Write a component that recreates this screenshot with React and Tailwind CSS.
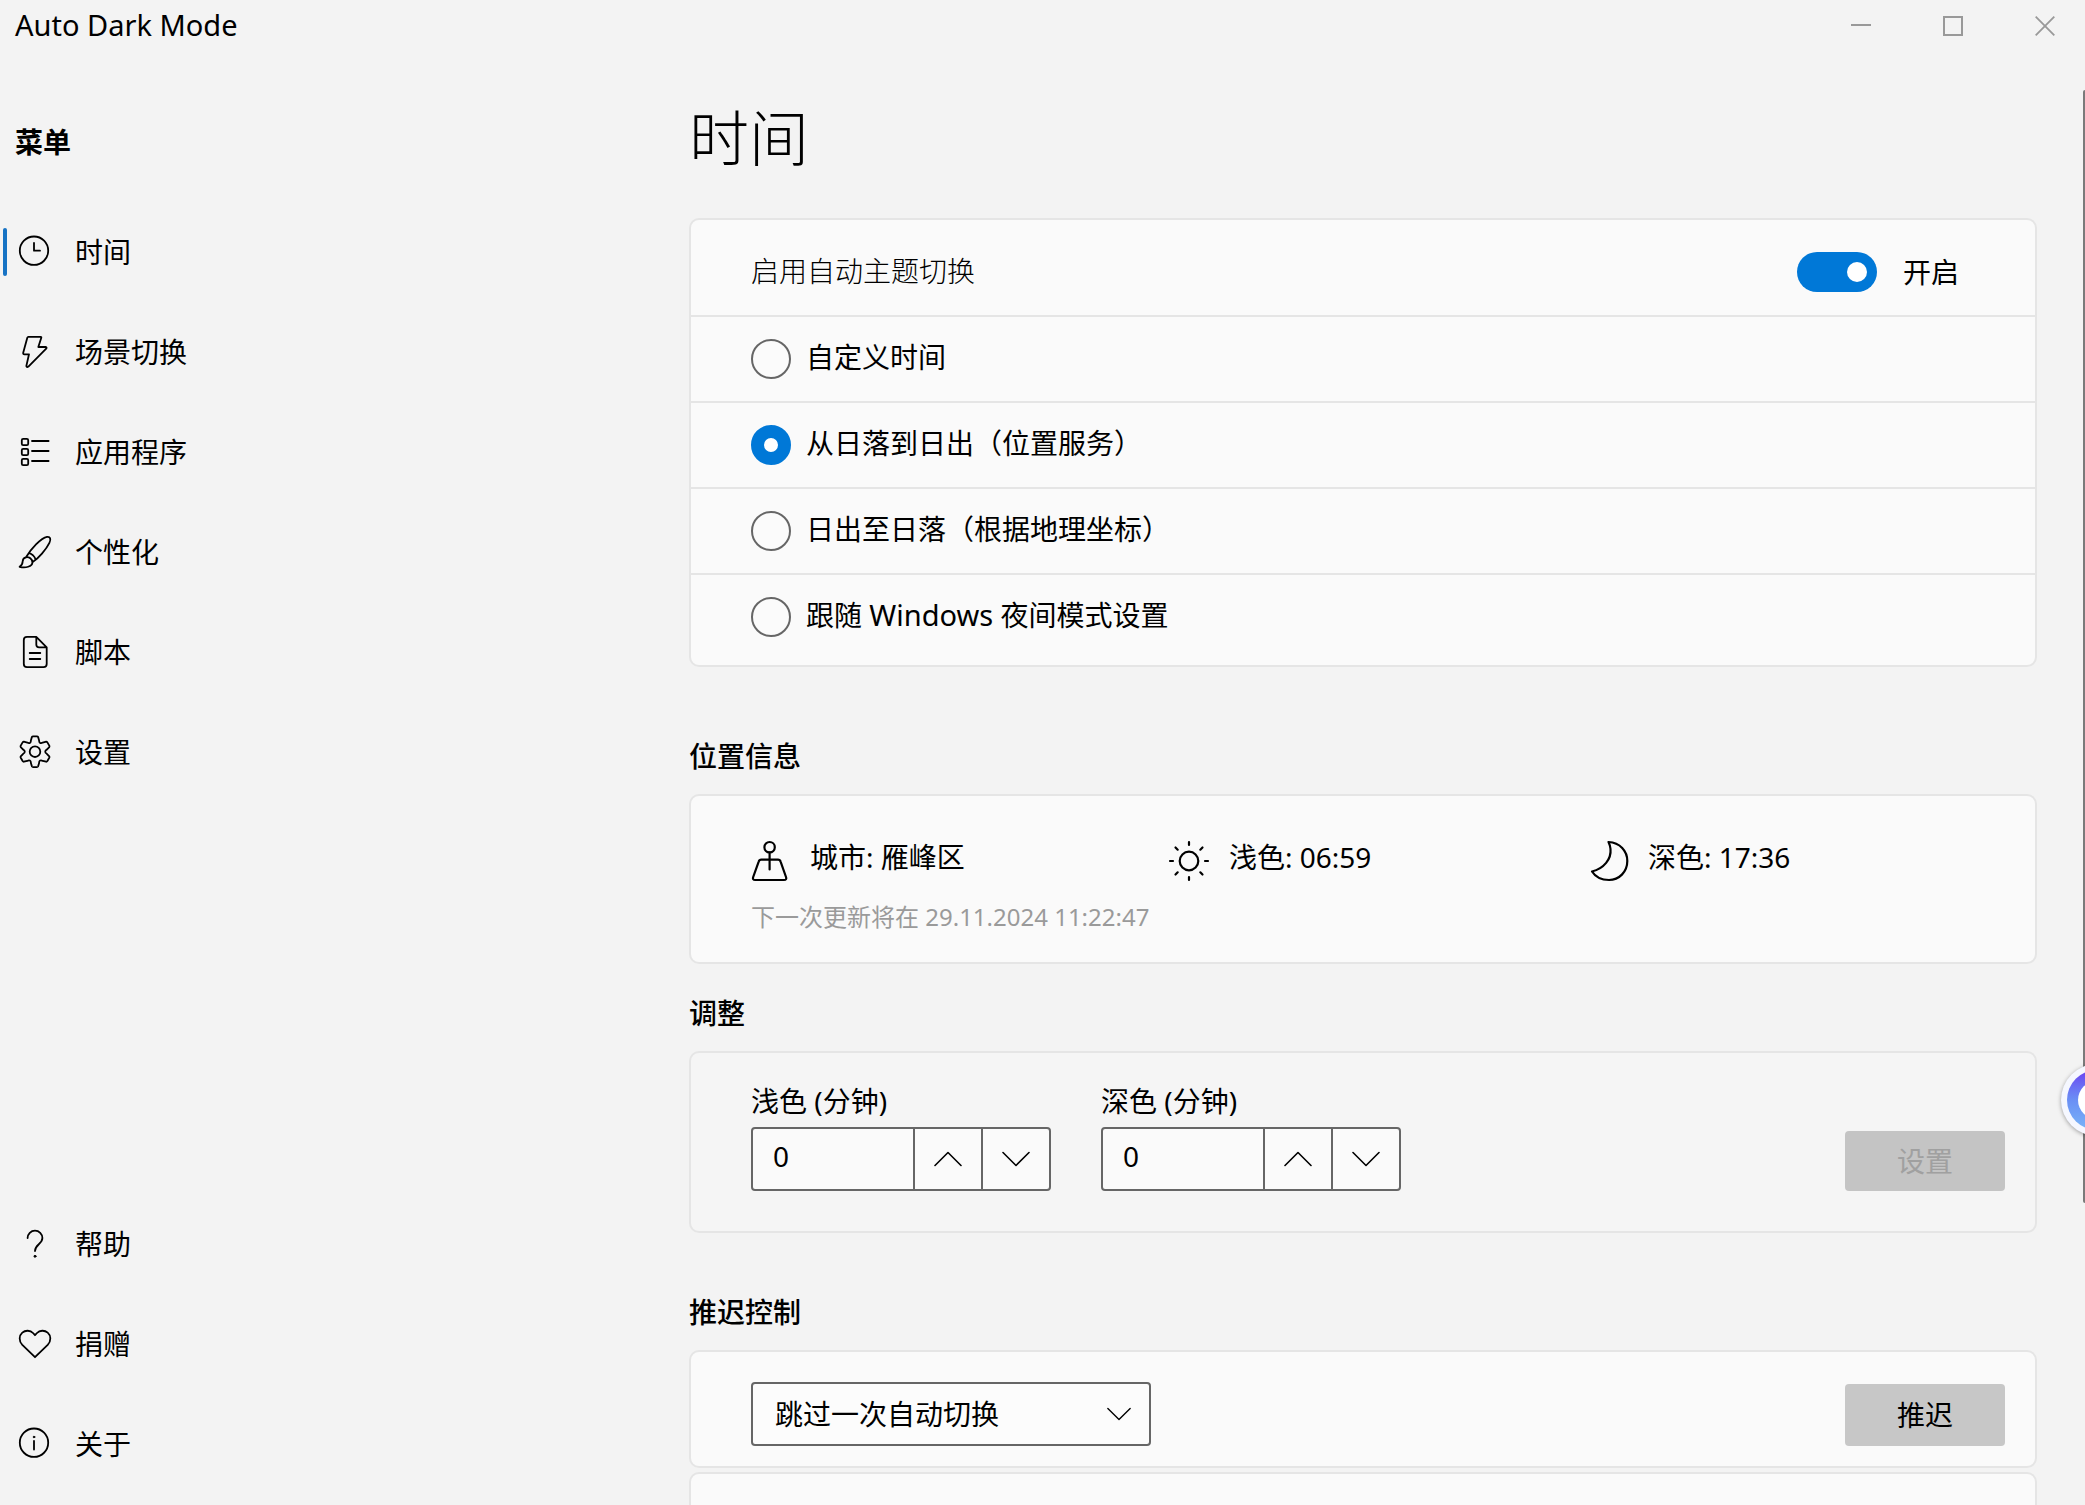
import React, { useState } from "react";

const stroke = {
  fill: "none",
  stroke: "currentColor",
  strokeWidth: 1.8,
  strokeLinecap: "round",
  strokeLinejoin: "round",
};

const polar = (angle, radius) => {
  const a = (angle * Math.PI) / 180;
  return `${(17 + radius * Math.cos(a)).toFixed(2)} ${(15.7 + radius * Math.sin(a)).toFixed(2)}`;
};

const gearPath =
  [0, 1, 2, 3, 4, 5]
    .map((k) => {
      const a = k * 60 - 90;
      return [
        `${k === 0 ? "M" : "L"}${polar(a - 12, 15)}`,
        `Q${polar(a - 10, 15.6)} ${polar(a - 7, 15.5)}`,
        `L${polar(a + 7, 15.5)}`,
        `Q${polar(a + 10, 15.6)} ${polar(a + 12, 15)}`,
        `L${polar(a + 20, 12)}`,
        `Q${polar(a + 23, 10.3)} ${polar(a + 30, 10.2)}`,
        `Q${polar(a + 37, 10.3)} ${polar(a + 40, 12)}`,
      ].join(" ");
    })
    .join(" ") + "Z";

const icons = {
  clock: (
    <>
      <circle cx="16" cy="14.7" r="14.2" />
      <path d="M16 7v7.7h6" />
    </>
  ),
  bolt: <path d="M10.3 .8H22.6q1 0 .7 1L20.3 11h7.3q1.6.3.6 1.7L10.4 30.6q-1.6 1.1-2.1-.5L11 18.3H6.4q-1.5 0-1.2-1.5L9.3 1.7q.3-.9 1-.9Z" />,
  list: (
    <>
      <rect x="3.8" y="2.8" width="6.4" height="6.4" rx="1.4" />
      <rect x="3.8" y="12.8" width="6.4" height="6.4" rx="1.4" />
      <rect x="3.8" y="22.8" width="6.4" height="6.4" rx="1.4" />
      <path d="M14 5h16.6M14 15h16.6M14 25h16.6" />
    </>
  ),
  brush: (
    <path d="M8 21.3C12.7 13.3 23 1.9 29 .9c3.4-.5 4.2 2.5 2.4 6C28.3 13.3 20.3 22.6 14.4 26.3M8 21.3c3-.7 6.4 1.7 6.4 5.2c0 4.2-7 5.7-12.8 4.3c2.2-1.3 3-2.8 3.1-5.5c.1-2.2 1.3-3.6 3.3-4ZM10.9 17q5 1.5 6.7 6.5" />
  ),
  document: (
    <>
      <path d="M18.3 .8H9q-3.2 0-3.2 3.2V28q0 3.2 3.2 3.2H25.5q3.2 0 3.2-3.2V11.3ZM18.3 .8V8.5q0 2.8 2.8 2.8h7.5" />
      <path d="M11.7 17H22.3M11.7 23H22.3" />
    </>
  ),
  gear: (
    <>
      <path d={gearPath} />
      <circle cx="17" cy="15.7" r="5.3" />
    </>
  ),
  help: (
    <>
      <path d="M9.6 10a7.4 7.4 0 0 1 14.8 0C24.4 16 17 16.5 17 23" />
      <circle cx="17" cy="28.3" r="1" fill="currentColor" strokeWidth="1" />
    </>
  ),
  heart: (
    <path d="M17 29.2L4.3 16.9C.6 13 1 7.5 4.3 4.6C7.5 1.9 12.3 2.2 15 5L17 7.2L19 5C21.7 2.2 26.5 1.9 29.7 4.6C33 7.5 33.4 13 29.7 16.9Z" />
  ),
  info: (
    <>
      <circle cx="16" cy="14.7" r="14.2" />
      <path d="M16 13v8.5" />
      <circle cx="16" cy="9" r=".8" fill="currentColor" strokeWidth="1" />
    </>
  ),
};

const bigIcons = {
  city: (
    <>
      <circle cx="19.6" cy="6.2" r="5.2" />
      <path d="M19.6 11.5V28.5M11.3 18.6H28q2 0 2.6 2L36 36q1 3-2 3H5.2q-3 0-2-3L8.7 20.6q.6-2 2.6-2Z" />
    </>
  ),
  sun: (
    <>
      <circle cx="20" cy="20" r="9.3" />
      <path d="M20 1v3M20 36v3M1 20h3M36 20h3M6.5 6.5l2.2 2.2M31.3 31.3l2.2 2.2M6.5 33.5l2.2-2.2M31.3 8.7l2.2-2.2" />
    </>
  ),
  moon: <path d="M20.5 1C32 1.7 39.3 10 39.3 20C39.3 31 31 39 21 39C13.5 39 7.5 36 4 30.5C16 27.5 23.5 18 22.5 8C22.2 5 21.5 3 20.5 1Z" />,
};

function NavIcon({ name }) {
  return (
    <svg viewBox="0 0 32 32" className="size-8 shrink-0 overflow-visible" aria-hidden="true" {...stroke}>
      {icons[name]}
    </svg>
  );
}

function BigIcon({ name }) {
  return (
    <svg viewBox="0 0 40 40" className="size-10 shrink-0 overflow-visible" aria-hidden="true" {...stroke} strokeWidth={2.2}>
      {bigIcons[name]}
    </svg>
  );
}

function Chevron({ up = false, className = "h-4 w-7" }) {
  return (
    <svg viewBox="0 0 28 16" className={className} aria-hidden="true" {...stroke} strokeWidth={1.6}>
      <path d={up ? "M1 14.5L14 1.5L27 14.5" : "M1 1.5L14 14.5L27 1.5"} />
    </svg>
  );
}

function NavItem({ icon, label, active }) {
  return (
    <li>
      <a href="#" aria-current={active ? "page" : undefined} className="flex h-[100px] items-center pl-[3px]">
        <span className={active ? "h-12 w-1 rounded-full bg-[#1773c4]" : "h-12 w-1"} />
        <span className="ml-[11px] flex">
          <NavIcon name={icon} />
        </span>
        <span className="ml-[25px]">{label}</span>
      </a>
    </li>
  );
}

function Spinner({ id, label }) {
  const [value, setValue] = useState(0);
  return (
    <div className="w-[300px]">
      <label htmlFor={id} className="block h-10 leading-10">
        {label}
      </label>
      <div className="mt-1.5 flex h-16 rounded-[4px] border-2 border-[#666] bg-[#fafafa]">
        <input
          id={id}
          value={value}
          onChange={(e) => setValue(Number(e.target.value) || 0)}
          className="w-0 min-w-0 flex-1 bg-transparent pb-1.5 pl-5 outline-none"
        />
        <button aria-label="增加" onClick={() => setValue(value + 1)} className="flex w-[68px] items-center justify-center border-l-2 border-[#666]">
          <Chevron up />
        </button>
        <button aria-label="减少" onClick={() => setValue(value - 1)} className="flex w-[68px] items-center justify-center border-l-2 border-[#666]">
          <Chevron />
        </button>
      </div>
    </div>
  );
}

const modes = [
  "自定义时间",
  "从日落到日出（位置服务）",
  "日出至日落（根据地理坐标）",
  <>
    跟随 <span className="text-[29px]">Windows</span> 夜间模式设置
  </>,
];

const facts = [
  ["city", "城市: 雁峰区"],
  ["sun", "浅色: 06:59"],
  ["moon", "深色: 17:36"],
];

const heading = "mb-[18px] h-10 text-[28px] leading-10 font-medium";
const card = "rounded-[10px] border-2 border-[#e5e5e5] bg-[#fafafa]";

export default function App() {
  const [mode, setMode] = useState(1);
  const [enabled, setEnabled] = useState(true);
  return (
    <div className="relative flex h-screen flex-col overflow-hidden bg-[#f3f3f3] font-['Noto_Sans','Noto_Sans_CJK_SC',sans-serif] text-[28px] leading-10 font-normal text-black">
      <header className="flex h-[52px] shrink-0 items-center justify-between pl-[15px]">
        <span className="pb-0.5 text-[29px]">Auto Dark Mode</span>
        <div className="flex h-full text-[#999]">
          <button aria-label="最小化" className="flex w-[92px] items-center justify-center">
            <svg viewBox="0 0 20 20" className="size-5" aria-hidden="true">
              <path d="M0 9h20" stroke="currentColor" strokeWidth="2" />
            </svg>
          </button>
          <button aria-label="最大化" className="flex w-[92px] items-center justify-center">
            <svg viewBox="0 0 20 20" className="size-5" aria-hidden="true">
              <rect x="1" y="1" width="18" height="18" fill="none" stroke="currentColor" strokeWidth="2" />
            </svg>
          </button>
          <button aria-label="关闭" className="flex w-[86px] items-center justify-center pl-1.5">
            <svg viewBox="0 0 20 20" className="size-5" aria-hidden="true">
              <path d="M.7 .7l18.6 18.6M19.3 .7L.7 19.3" stroke="currentColor" strokeWidth="1.8" />
            </svg>
          </button>
        </div>
      </header>

      <div className="flex min-h-0 flex-1">
        <aside className="flex w-[689px] shrink-0 flex-col pb-[11px]">
          <h2 className="mt-[70px] h-10 pl-[15px] leading-10 font-bold">菜单</h2>
          <nav aria-label="菜单" className="mt-10 flex flex-1 flex-col justify-between">
            <ul>
              <NavItem icon="clock" label="时间" active />
              <NavItem icon="bolt" label="场景切换" />
              <NavItem icon="list" label="应用程序" />
              <NavItem icon="brush" label="个性化" />
              <NavItem icon="document" label="脚本" />
              <NavItem icon="gear" label="设置" />
            </ul>
            <ul>
              <NavItem icon="help" label="帮助" />
              <NavItem icon="heart" label="捐赠" />
              <NavItem icon="info" label="关于" />
            </ul>
          </nav>
        </aside>

        <main className="min-w-0 flex-1 pr-12">
          <h1 className="mt-[46px] mb-10 h-20 text-[60px] leading-[80px] font-light">时间</h1>

          <section className={card}>
            <div className="flex h-[97px] items-center justify-between border-b-2 border-[#e5e5e5] pt-2 pr-[76px] pl-[60px]">
              <span id="auto-switch" className="pb-0.5 font-light">
                启用自动主题切换
              </span>
              <label className="flex items-center gap-[26px]">
                <input
                  type="checkbox"
                  role="switch"
                  aria-labelledby="auto-switch"
                  checked={enabled}
                  onChange={(e) => setEnabled(e.target.checked)}
                  className="flex h-10 w-20 appearance-none items-center rounded-full bg-[#8a8a8a] pr-2.5 pl-2.5 before:size-5 before:rounded-full before:bg-white checked:justify-end checked:bg-[#0078d7]"
                />
                <span>{enabled ? "开启" : "关闭"}</span>
              </label>
            </div>
            <div className="divide-y-2 divide-[#e5e5e5] pb-1.5">
              {modes.map((label, i) => (
                <label key={i} className="flex h-[86px] items-center gap-[15px] pl-[60px] last:h-[84px]">
                  <input
                    type="radio"
                    name="mode"
                    checked={mode === i}
                    onChange={() => setMode(i)}
                    className="size-10 shrink-0 appearance-none rounded-full border-2 border-[#666] bg-[#fbfbfb] checked:border-[13px] checked:border-[#0078d7] checked:bg-white"
                  />
                  <span className="pb-1">{label}</span>
                </label>
              ))}
            </div>
          </section>

          <h2 className={`${heading} mt-[69px]`}>位置信息</h2>
          <section className={`${card} h-[170px] pt-[45px] pr-7 pl-[60px]`}>
            <div className="-ml-px grid h-10 grid-cols-3">
              {facts.map(([icon, text]) => (
                <div key={text} className="flex h-10 items-center gap-5">
                  <BigIcon name={icon} />
                  <span className="pb-2">{text}</span>
                </div>
              ))}
            </div>
            <p className="mt-4 text-2xl leading-10 text-[#9a9a9a]">下一次更新将在 29.11.2024 11:22:47</p>
          </section>

          <h2 className={`${heading} mt-[29px]`}>调整</h2>
          <section className="flex items-end justify-between rounded-[10px] border-2 border-[#e5e5e5] bg-[#f5f5f5] pt-7 pr-[30px] pb-10 pl-[60px]">
            <div className="flex gap-[50px]">
              <Spinner id="light-offset" label="浅色 (分钟)" />
              <Spinner id="dark-offset" label="深色 (分钟)" />
            </div>
            <button disabled className="h-[60px] w-40 rounded-[4px] bg-[#c4c4c4] text-[#a0a0a0]">
              设置
            </button>
          </section>

          <h2 className={`${heading} mt-[59px]`}>推迟控制</h2>
          <section className={`${card} flex items-end justify-between pt-[30px] pr-[30px] pb-5 pl-[60px]`}>
            <div className="relative w-[400px]">
              <select aria-label="推迟控制" className="block h-16 w-full appearance-none rounded-[4px] border-2 border-[#666] bg-[#fcfcfc] pl-[22px] text-black">
                <option>跳过一次自动切换</option>
              </select>
              <Chevron className="pointer-events-none absolute top-6 right-5 h-4 w-6" />
            </div>
            <button className="h-[62px] w-40 rounded-[4px] bg-[#c7c7c7]">推迟</button>
          </section>
          <section className={`${card} mt-1 h-[118px]`} />
        </main>
      </div>

      <div className="absolute top-[90px] right-0 h-[1113px] w-0.5 rounded-l-sm bg-[#7a7a7a]" />
      <button
        aria-label="助手"
        className="absolute top-[1064px] -right-12 flex size-[72px] items-center justify-center rounded-full bg-[#f5f7ff] shadow-[0_1px_4px_rgba(0,0,0,0.35)]"
      >
        <span className="flex size-[60px] items-center justify-center rounded-full bg-linear-to-b from-[#6a3df0] via-[#6a8ff5] to-[#79b4f7]">
          <span className="size-[38px] rounded-full bg-white" />
        </span>
      </button>
    </div>
  );
}
